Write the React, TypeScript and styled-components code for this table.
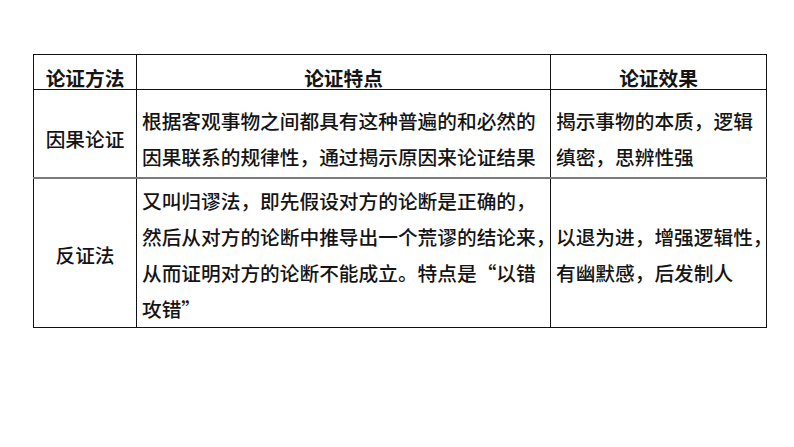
import React from "react";
import styled, { createGlobalStyle } from "styled-components";

const GlobalStyle = createGlobalStyle`
	html, body {
		margin: 0;
		padding: 0;
		background: #ffffff;
	}
	body {
		font-family: "Noto Sans CJK SC", "Microsoft YaHei", "Noto Sans", sans-serif;
		color: #141414;
	}
`;

const Page = styled.div`
	width: 794px;
	height: 447px;
	padding: 54px 0 0 33px;
	box-sizing: border-box;
`;

const Table = styled.table`
	width: 733px;
	border-collapse: collapse;
	table-layout: fixed;
	font-size: 19.7px;
	font-weight: 500;
	line-height: 36px;
	border: 1px solid #111;
`;

const Col = styled.col<{ $w: number }>`
	width: ${(p) => p.$w}px;
`;

const HeadCell = styled.th`
	height: 35px;
	padding: 12px 0 0;
	box-sizing: border-box;
	border: 1px solid #111;
	font-weight: bold;
	text-align: center;
	vertical-align: middle;
	line-height: 22px;
`;

const Row = styled.tr<{ $h: number; $divider?: boolean }>`
	height: ${(p) => p.$h}px;
	${(p) => (p.$divider ? "border-bottom: 2px solid #7a7a7a;" : "")}
`;

const NameCell = styled.td<{ $shift: number }>`
	border-left: 1px solid #111;
	border-right: 1px solid #111;
	text-align: center;
	vertical-align: middle;
	padding: ${(p) => p.$shift}px 0 0;
`;

const TextCell = styled.td<{ $shift: number }>`
	border-left: 1px solid #111;
	border-right: 1px solid #111;
	vertical-align: middle;
	padding: ${(p) => p.$shift}px 2px 0 5px;
	white-space: nowrap;
	overflow: visible;
`;

const Line = styled.div`
	white-space: nowrap;
`;

const rows = [
	{
		name: "因果论证",
		h: 88,
		shift: 12,
		feature: ["根据客观事物之间都具有这种普遍的和必然的", "因果联系的规律性，通过揭示原因来论证结果"],
		effect: ["揭示事物的本质，逻辑", "缜密，思辨性强"],
	},
	{
		name: "反证法",
		h: 144,
		shift: 4,
		feature: [
			"又叫归谬法，即先假设对方的论断是正确的，",
			"然后从对方的论断中推导出一个荒谬的结论来，",
			"从而证明对方的论断不能成立。特点是“以错",
			"攻错”",
		],
		effect: ["以退为进，增强逻辑性，", "有幽默感，后发制人"],
	},
];

export default function App() {
	return (
		<Page>
			<GlobalStyle />
			<Table>
				<colgroup>
					<Col $w={103} />
					<Col $w={414} />
					<Col $w={216} />
				</colgroup>
				<thead>
					<tr>
						<HeadCell>论证方法</HeadCell>
						<HeadCell>论证特点</HeadCell>
						<HeadCell>论证效果</HeadCell>
					</tr>
				</thead>
				<tbody>
					{rows.map((r, i) => (
						<Row key={r.name} $h={r.h} $divider={i < rows.length - 1}>
							<NameCell $shift={r.shift}>{r.name}</NameCell>
							<TextCell $shift={r.shift}>
								{r.feature.map((l) => (
									<Line key={l}>{l}</Line>
								))}
							</TextCell>
							<TextCell $shift={r.shift}>
								{r.effect.map((l) => (
									<Line key={l}>{l}</Line>
								))}
							</TextCell>
						</Row>
					))}
				</tbody>
			</Table>
		</Page>
	);
}
